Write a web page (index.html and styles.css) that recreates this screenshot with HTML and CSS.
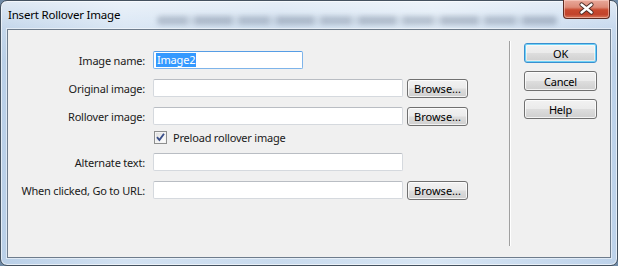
FILE: index.html
```html
<!DOCTYPE html>
<html>
<head>
<meta charset="utf-8">
<link rel="stylesheet" href="styles.css">
</head>
<body>
<div class="window">
  <div class="titlebar">
    <span class="title">Insert Rollover Image</span>
    <div class="close">
      <svg width="47" height="19" viewBox="0 0 47 19">
        <path d="M18.5 5.5 L28.5 13.5 M28.5 5.5 L18.5 13.5" stroke="#4a2a24" stroke-width="4.2" stroke-linecap="round"/>
        <path d="M18.5 5.5 L28.5 13.5 M28.5 5.5 L18.5 13.5" stroke="#ffffff" stroke-width="2.4" stroke-linecap="round"/>
      </svg>
    </div>
  </div>
  <div class="client">
    <div class="form">
      <div class="row">
        <span class="lbl">Image name:</span>
        <div class="input short focus"><span class="sel">Image2</span></div>
      </div>
      <div class="row">
        <span class="lbl">Original image:</span>
        <div class="input"></div>
        <div class="btn browse">Browse...</div>
      </div>
      <div class="row">
        <span class="lbl">Rollover image:</span>
        <div class="input"></div>
        <div class="btn browse">Browse...</div>
      </div>
      <div class="row check-row">
        <span class="lbl"></span>
        <span class="checkbox">
          <svg width="13" height="13" viewBox="0 0 13 13">
            <path d="M3 6.2 L5.4 9 L10 2.8" fill="none" stroke="#3a4f8a" stroke-width="1.9"/>
          </svg>
        </span>
        <span class="check-label">Preload rollover image</span>
      </div>
      <div class="row alt-row">
        <span class="lbl">Alternate text:</span>
        <div class="input"></div>
      </div>
      <div class="row">
        <span class="lbl">When clicked, Go to URL:</span>
        <div class="input"></div>
        <div class="btn browse">Browse...</div>
      </div>
    </div>
    <div class="sep"></div>
    <div class="buttons">
      <div class="btn big default">OK</div>
      <div class="btn big">Cancel</div>
      <div class="btn big">Help</div>
    </div>
  </div>
</div>
</body>
</html>
```

FILE: styles.css
```css
html, body {
  margin: 0;
  padding: 0;
  background: #6f8aa6;
}
body {
  width: 618px;
  height: 266px;
  overflow: hidden;
  font-family: "Noto Sans", "Open Sans", sans-serif;
  font-size: 11px;
  letter-spacing: -0.2px;
  color: #1a1a1a;
}
.window {
  box-sizing: border-box;
  width: 618px;
  height: 266px;
  border: 1px solid #44515f;
  border-radius: 7px;
  background:
    linear-gradient(180deg, rgba(255,255,255,0.55) 0px, rgba(255,255,255,0.15) 28px, rgba(255,255,255,0) 60px),
    linear-gradient(90deg, #b9cfe7 0%, #d3e2f2 20%, #c9dbee 45%, #d8e6f4 70%, #bdd2ea 100%);
  display: flex;
  flex-direction: column;
  padding: 0 6px 7px 6px;
  box-shadow: inset 0 0 0 1px rgba(255,255,255,0.6);
}
.titlebar {
  height: 28px;
  display: flex;
  align-items: flex-start;
  position: relative;
}
.titlebar::before {
  content: "";
  position: absolute;
  left: 150px;
  top: 15px;
  width: 400px;
  height: 9px;
  background: repeating-linear-gradient(90deg, rgba(70,85,110,0.28) 0 30px, rgba(70,85,110,0.12) 30px 38px, rgba(70,85,110,0.3) 38px 75px, rgba(70,85,110,0.1) 75px 82px);
  filter: blur(2.5px);
  border-radius: 4px;
}
.title {
  position: relative;
  padding-top: 6px;
  padding-left: 1px;
  line-height: 16px;
  font-size: 11.5px;
  color: #000;
}
.close {
  position: absolute;
  right: 1px;
  top: -1px;
  width: 47px;
  height: 19px;
  box-sizing: border-box;
  border: 1px solid #5e2b22;
  border-top: none;
  border-radius: 0 0 4px 4px;
  background: linear-gradient(180deg, #e9a99b 0%, #dd8b78 40%, #c8492f 55%, #c2432b 80%, #d7775c 100%);
  box-shadow: inset 0 0 0 1px rgba(255,220,210,0.5);
}
.close svg { display: block; margin: -1px 0 0 -1px; }
.client {
  flex: 1;
  display: flex;
  background: #f0f0f0;
  border: 1px solid #6e7c8c;
  box-shadow: 0 0 0 1px rgba(255,255,255,0.5);
}
.form {
  width: 500px;
  padding-top: 20px;
  display: flex;
  flex-direction: column;
  gap: 8px;
}
.row {
  height: 20px;
  display: flex;
  align-items: center;
}
.check-row {
  margin-top: -7px;
  height: 20px;
}
.alt-row {
  margin-top: -3px;
}
.lbl {
  width: 137px;
  padding-right: 8px;
  text-align: right;
  white-space: nowrap;
  flex: none;
}
.input {
  box-sizing: border-box;
  width: 250px;
  height: 18px;
  background: #fff;
  border: 1px solid #d5d9de;
  border-top-color: #b9bdc3;
  border-radius: 2px;
  flex: none;
  display: flex;
  align-items: center;
}
.input.short { width: 150px; }
.input.focus {
  border-color: #7eb4ea;
  border-top-color: #569de5;
}
.sel {
  margin-left: 2px;
  background: #3399ff;
  color: #fff;
  line-height: 14px;
  padding: 0 1px;
}
.btn {
  box-sizing: border-box;
  border: 1px solid #707070;
  border-radius: 3px;
  background: linear-gradient(180deg, #f2f2f2 0%, #ebebeb 48%, #dddddd 52%, #cfcfcf 100%);
  box-shadow: inset 0 0 0 1px rgba(255,255,255,0.75);
  display: flex;
  align-items: center;
  justify-content: center;
  color: #000;
}
.browse {
  width: 61px;
  height: 19px;
  margin-left: 4px;
  flex: none;
  letter-spacing: 0;
}
.checkbox {
  box-sizing: border-box;
  width: 13px;
  height: 13px;
  margin-left: 1px;
  border: 1px solid #8e8f8f;
  background: linear-gradient(135deg, #dcdcdc 0%, #f4f4f4 60%, #ffffff 100%);
  box-shadow: inset 0 0 0 1px #f4f4f4;
  flex: none;
  position: relative;
}
.checkbox svg {
  position: absolute;
  left: -1px;
  top: -1px;
}
.check-label {
  margin-left: 6px;
}
.sep {
  width: 1px;
  height: 205px;
  margin-top: 11px;
  margin-left: 1px;
  background: #a0a0a0;
  box-shadow: 1px 0 0 #ffffff;
  flex: none;
}
.buttons {
  margin-left: 14px;
  padding-top: 13px;
  display: flex;
  flex-direction: column;
  gap: 8px;
}
.big {
  width: 73px;
  height: 20px;
}
.default {
  border-color: #3a8fcf;
  box-shadow: inset 0 0 0 1px #6fd3f7, inset 0 0 0 2px rgba(255,255,255,0.5);
}
```
